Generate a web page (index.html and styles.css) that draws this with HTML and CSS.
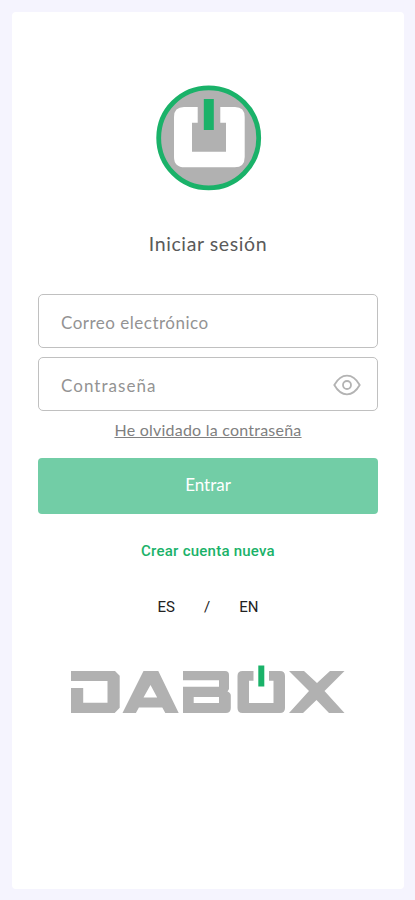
FILE: index.html
```html
<!DOCTYPE html>
<html lang="es">
<head>
<meta charset="utf-8">
<title>Iniciar sesión</title>
<link rel="stylesheet" href="styles.css">
</head>
<body>
<main class="card">
  <svg class="emblem" viewBox="156 85 106 106" aria-hidden="true">
    <circle cx="208.7" cy="137.9" r="50" fill="#b1b1b1" stroke="#1ab269" stroke-width="4.8"/>
    <path fill="#fff" d="M184 107h13.7v15.7H192v29h34v-29h-5.7V107H235q9.7 0 9.7 10v40q0 10.3-10 10.3h-50q-10.7 0-10.7-10.3v-40q0-10 10-10z"/>
    <path fill="#1ab269" d="M203.8 99h10v31h-10z"/>
  </svg>
  <h1 class="title">Iniciar sesión</h1>
  <form class="form">
    <div class="field"><span class="email">Correo electrónico</span></div>
    <div class="field"><span class="password">Contraseña</span>
      <svg class="eye" viewBox="0 0 28 22" fill="none" stroke="#b3b3b3" stroke-width="1.8" aria-hidden="true">
        <path d="M1.3 11C5 4.5 9 1.7 14 1.7S23 4.5 26.7 11C23 17.5 19 20.3 14 20.3S5 17.5 1.3 11z"/>
        <circle cx="14" cy="11" r="4"/>
      </svg>
    </div>
    <a class="forgot">He olvidado la contraseña</a>
    <div class="submit"><span>Entrar</span></div>
  </form>
  <a class="create">Crear cuenta nueva</a>
  <nav class="langs"><span>ES</span><span>/</span><span>EN</span></nav>
  <svg class="wordmark" viewBox="70 664 276 50" aria-label="DABOX">
    <g fill="#b1b1b1" fill-rule="evenodd">
      <path d="M71 671h44l4.7 4.7v32l-5 5.3H71v-25h12.2v14.8h24.3V681H71z"/>
      <path d="M143.5 671h14.8l20.4 42h-13.4l-3-5.5h-23.4l-3 5.5h-13.4zM150.5 685l-7 12.5h13.7z"/>
      <path d="M183 671h42q4 0 4 4v14l-1.5 2.5q3.3 1.5 3.3 4V708q0 5-5 5H183v-26.3h36V680.300h-36zM193.700 697v6H219v-6z"/>
      <path d="M242.500 671h11v9.700H249V703h24.500v-22.300H269V671h11q5 0 5 5v32q0 5-5 5h-37.500q-5 0-5-5v-32q0-5 5-5z"/>
      <path d="M289 671h15l13 12 13-12h14.500l-20 20 20 22H329l-12.500-13-13.500 13h-14l20-22z"/>
    </g>
    <path fill="#1ab269" d="M258.300 665.500h6v21h-6z"/>
  </svg>
</main>
</body>
</html>
```
FILE: styles.css
```css
* { box-sizing: border-box; }
body {
  margin: 0;
  height: 900px;
  padding: 12px 11px 11px 12px;
  background: #f5f4fe;
  font-family: Lato, sans-serif;
}
.card {
  height: 877px;
  padding: 73px 26px 0;
  border-radius: 4px;
  background: #fff;
  display: flex;
  flex-direction: column;
  align-items: center;
}
.emblem { width: 106px; height: 106px; flex: none; margin-left: 1px; }
.title {
  margin: 41px 0 0;
  height: 24px;
  line-height: 24px;
  font-size: 19.500px;
  font-weight: 400;
  letter-spacing: .6px;
  color: #5a5a5a;
  white-space: nowrap;
}
.form {
  width: 340px;
  margin-top: 38px;
  display: flex;
  flex-direction: column;
  align-items: center;
}
.field {
  width: 340px;
  height: 54px;
  margin-bottom: 9px;
  padding: 2px 16px 0 22px;
  border: 1px solid #c0c0c0;
  border-radius: 5px;
  display: flex;
  align-items: center;
  justify-content: space-between;
  font-size: 17px;
  color: #939393;
}
.email { letter-spacing: .5px; }
.password { letter-spacing: 1.050px; }
.eye { width: 28px; height: 22px; margin-top: -1px; }
.forgot {
  height: 20px;
  line-height: 20px;
  font-size: 16px;
  letter-spacing: .23px;
  color: #808080;
  text-decoration: underline;
  white-space: nowrap;
}
.submit {
  width: 340px;
  height: 56px;
  margin-top: 18px;
  padding-bottom: 3px;
  border-radius: 4px;
  background: #72cda6;
  color: #fff;
  font-size: 17px;
  display: flex;
  align-items: center;
  justify-content: center;
}
.create {
  margin-top: 27px;
  height: 20px;
  line-height: 20px;
  font-family: Roboto, sans-serif;
  font-size: 15px;
  font-weight: 500;
  letter-spacing: .24px;
  color: #1ab269;
}
.langs {
  margin-top: 36px;
  height: 20px;
  line-height: 20px;
  display: flex;
  gap: 29px;
  font-family: Roboto, sans-serif;
  font-size: 15px;
  color: #222;
}
.wordmark { width: 276px; height: 50px; flex: none; margin-top: 47px; }
```
